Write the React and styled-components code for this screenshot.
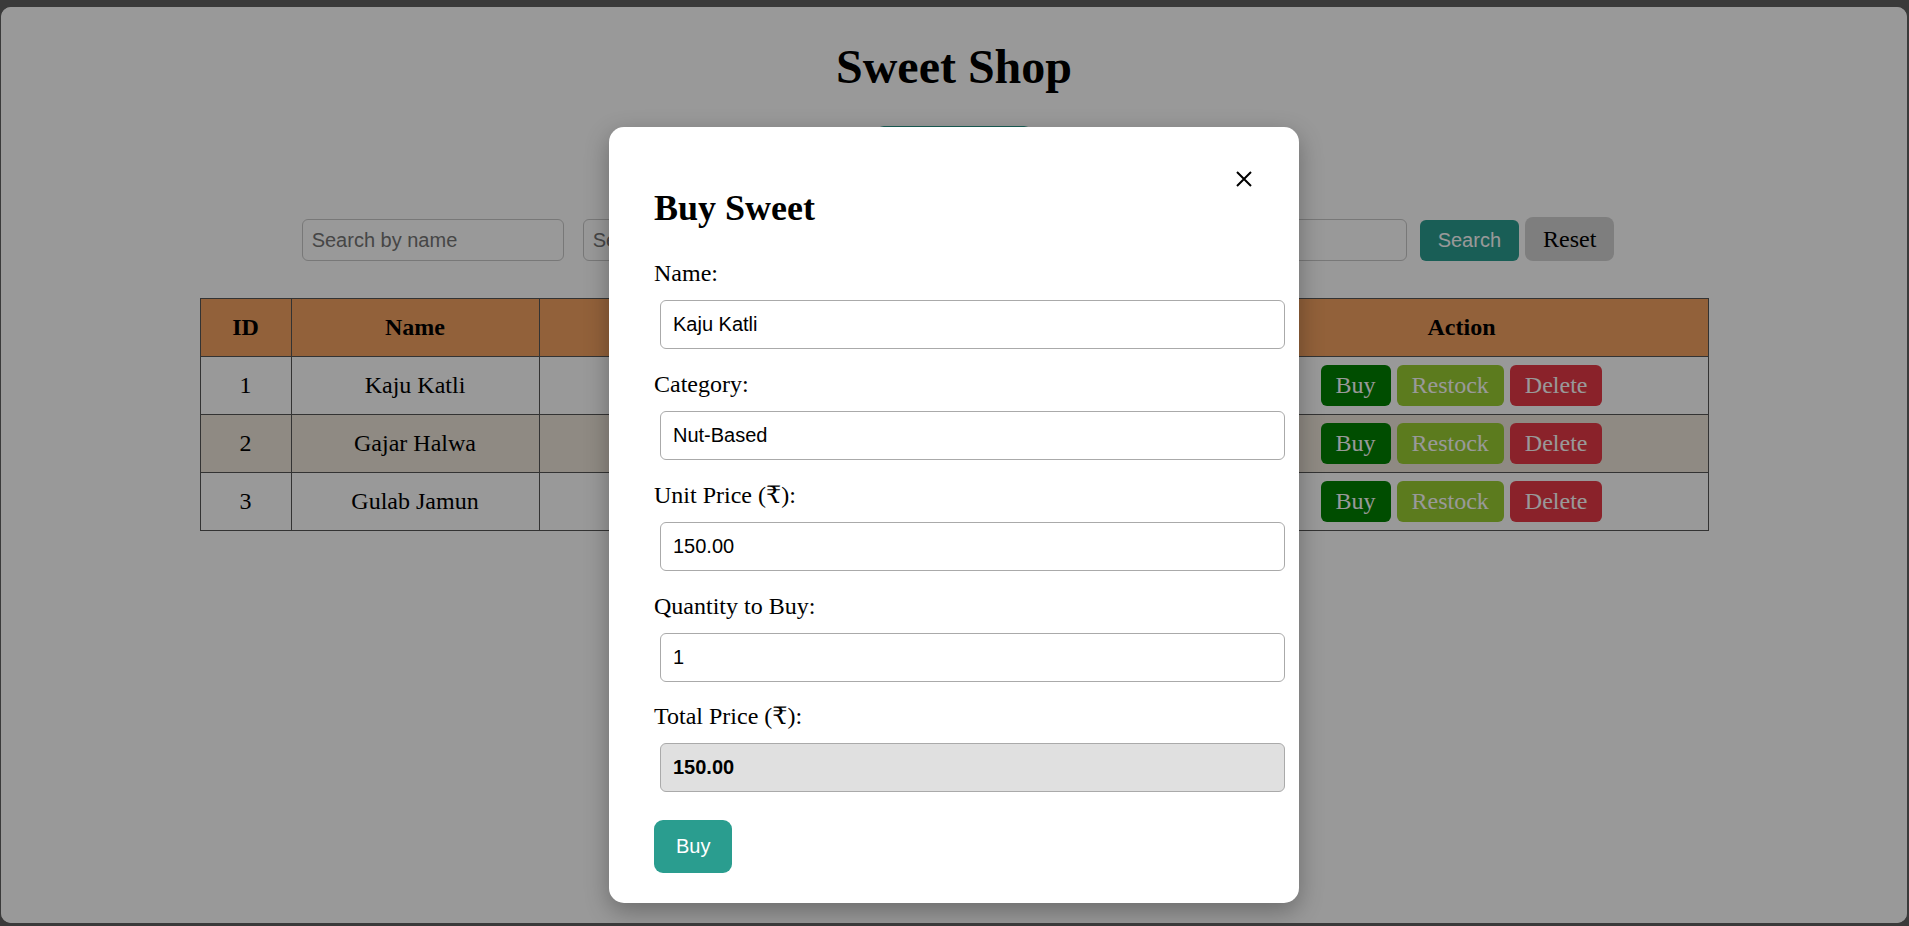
import React, { useState } from 'react';
import styled, { createGlobalStyle } from 'styled-components';

const GlobalStyle = createGlobalStyle`
    html, body {
        margin: 0;
        padding: 0;
        background: #3a3a3a;
    }
    body {
        font-family: "Liberation Serif", "DejaVu Serif", serif;
    }
`;

// Browser-like frame around the page
const Page = styled.div`
    position: relative;
    margin: 7px 2px 3px 1px;
    height: 916px;
    background: #fff;
    border-radius: 10px;
    overflow: hidden;
    padding-top: 1px;
    box-sizing: border-box;
`;

const Title = styled.h1`
    margin: 32px 0 33px;
    font-size: 48px;
    line-height: 53px;
    font-weight: bold;
    text-align: center;
    color: #000;
`;

const AddRow = styled.div`
    display: flex;
    justify-content: center;
    margin-bottom: 38px;
`;

const TealButton = styled.button`
    height: ${p => p.$h || 53}px;
    padding: 0 ${p => p.$px || 22}px;
    border: none;
    border-radius: ${p => p.$r || 9}px;
    background: #2a9d8f;
    color: #fff;
    font-family: "Liberation Sans", Arial, sans-serif;
    font-size: 20px;
    cursor: pointer;
`;

const SearchBar = styled.div`
    display: flex;
    justify-content: center;
    align-items: flex-end;
    padding-left: 8px;
`;

const SearchInput = styled.input`
    box-sizing: border-box;
    width: 262px;
    height: 42px;
    margin-right: ${p => p.$mr}px;
    padding: 0 9px;
    border: 1px solid #c8c8c8;
    border-radius: 6px;
    font-family: "Liberation Sans", Arial, sans-serif;
    font-size: 20px;
    &::placeholder { color: #757575; }
`;

const ResetButton = styled.button`
    height: 44px;
    margin-left: 6px;
    padding: 0 18px;
    border: none;
    border-radius: 8px;
    background: #d3d3d3;
    color: #000;
    font-family: "Liberation Serif", serif;
    font-size: 24px;
    cursor: pointer;
`;

const Table = styled.table`
    width: 1508px;
    margin: 37px auto 0;
    border-collapse: collapse;
    table-layout: fixed;
    font-size: 24px;
    color: #000;
`;

const Th = styled.th`
    height: 57px;
    padding: 0 12px;
    border: 1px solid #555;
    background: #f4a261;
    font-weight: bold;
    text-align: center;
`;

const Tr = styled.tr`
    background: ${p => (p.$even ? '#eee6da' : '#fff')};
`;

const Td = styled.td`
    height: 57px;
    padding: 0 12px;
    border: 1px solid #555;
    text-align: center;
    vertical-align: middle;
`;

const Actions = styled.div`
    display: flex;
    justify-content: center;
    gap: 6px;
`;

const ActionButton = styled.button`
    height: 41px;
    padding: 0 15px;
    border: none;
    border-radius: 6px;
    background: ${p => p.$bg};
    color: #fff;
    font-family: "Liberation Serif", serif;
    font-size: 24px;
    cursor: pointer;
`;

// Modal
const Overlay = styled.div`
    position: absolute;
    inset: 0;
    background: rgba(0, 0, 0, 0.4);
    display: flex;
    justify-content: center;
    align-items: flex-start;
    padding-top: 120px;
`;

const Modal = styled.div`
    position: relative;
    box-sizing: border-box;
    width: 690px;
    padding: 30px 45px;
    background: #fff;
    border-radius: 15px;
    box-shadow: 0 8px 24px rgba(0, 0, 0, 0.3);
`;

const CloseButton = styled.button`
    position: absolute;
    top: 44px;
    right: 47px;
    width: 16px;
    height: 16px;
    padding: 0;
    border: none;
    background: none;
    cursor: pointer;
    display: flex;
`;

const ModalTitle = styled.h2`
    margin: 31px 0 30px;
    font-size: 36px;
    line-height: 41px;
    font-weight: bold;
`;

const Group = styled.div`
    display: flex;
    flex-direction: column;
    align-items: flex-start;
    margin-bottom: ${p => p.$mb ?? 15}px;
`;

const Label = styled.label`
    margin-bottom: 7px;
    font-size: 24px;
    line-height: 28px;
`;

const Field = styled.input`
    box-sizing: border-box;
    width: 625px;
    height: 49px;
    margin: 6px;
    padding: 0 12px;
    border: 1px solid #aaa;
    border-radius: 6px;
    background: ${p => (p.readOnly ? '#e0e0e0' : '#fff')};
    font-family: "Liberation Sans", Arial, sans-serif;
    font-size: 20px;
    font-weight: ${p => (p.readOnly ? 'bold' : 'normal')};
    color: #000;
`;

const SubmitRow = styled.div`
    margin-top: 22px;
`;

const sweets = [
    { id: 1, name: 'Kaju Katli', category: 'Nut-Based', price: '150.00', qty: 20 },
    { id: 2, name: 'Gajar Halwa', category: 'Vegetable-Based', price: '30.00', qty: 15 },
    { id: 3, name: 'Gulab Jamun', category: 'Milk-Based', price: '10.00', qty: 50 },
];

export default function App() {
    const [qty, setQty] = useState('1');
    const unit = 150;
    const total = (unit * (Number(qty) || 0)).toFixed(2);

    return (
        <>
            <GlobalStyle />
            <Page>
                <Title>Sweet Shop</Title>
                <AddRow>
                    <TealButton $px={23}>+ Add Sweet</TealButton>
                </AddRow>

                <SearchBar>
                    <SearchInput $mr={19} placeholder="Search by name" />
                    <SearchInput $mr={19} placeholder="Search by category" />
                    <SearchInput $mr={19} placeholder="Min price" />
                    <SearchInput $mr={13} placeholder="Max price" />
                    <TealButton $h={41} $px={18} $r={6}>Search</TealButton>
                    <ResetButton>Reset</ResetButton>
                </SearchBar>

                <Table>
                    <colgroup>
                        <col style={{ width: 91 }} />
                        <col style={{ width: 248 }} />
                        <col style={{ width: 340 }} />
                        <col style={{ width: 168 }} />
                        <col style={{ width: 168 }} />
                        <col style={{ width: 493 }} />
                    </colgroup>
                    <thead>
                        <tr>
                            <Th>ID</Th>
                            <Th>Name</Th>
                            <Th>Category</Th>
                            <Th>Price (₹)</Th>
                            <Th>Quantity</Th>
                            <Th>Action</Th>
                        </tr>
                    </thead>
                    <tbody>
                        {sweets.map((s, i) => (
                            <Tr key={s.id} $even={i % 2 === 1}>
                                <Td>{s.id}</Td>
                                <Td>{s.name}</Td>
                                <Td>{s.category}</Td>
                                <Td>{s.price}</Td>
                                <Td>{s.qty}</Td>
                                <Td>
                                    <Actions>
                                        <ActionButton $bg="#008000">Buy</ActionButton>
                                        <ActionButton $bg="#9acd32">Restock</ActionButton>
                                        <ActionButton $bg="#e63946">Delete</ActionButton>
                                    </Actions>
                                </Td>
                            </Tr>
                        ))}
                    </tbody>
                </Table>

                <Overlay>
                    <Modal>
                        <CloseButton aria-label="Close">
                            <svg width="16" height="16" viewBox="0 0 16 16">
                                <path d="M1 1 L15 15 M15 1 L1 15" stroke="#000" strokeWidth="2" fill="none" />
                            </svg>
                        </CloseButton>
                        <ModalTitle>Buy Sweet</ModalTitle>
                        <Group>
                            <Label>Name:</Label>
                            <Field value="Kaju Katli" onChange={() => {}} />
                        </Group>
                        <Group>
                            <Label>Category:</Label>
                            <Field value="Nut-Based" onChange={() => {}} />
                        </Group>
                        <Group>
                            <Label>Unit Price (₹):</Label>
                            <Field value="150.00" onChange={() => {}} />
                        </Group>
                        <Group $mb={14}>
                            <Label>Quantity to Buy:</Label>
                            <Field value={qty} onChange={e => setQty(e.target.value)} />
                        </Group>
                        <Group $mb={14}>
                            <Label>Total Price (₹):</Label>
                            <Field value={total} readOnly />
                        </Group>
                        <SubmitRow>
                            <TealButton>Buy</TealButton>
                        </SubmitRow>
                    </Modal>
                </Overlay>
            </Page>
        </>
    );
}
